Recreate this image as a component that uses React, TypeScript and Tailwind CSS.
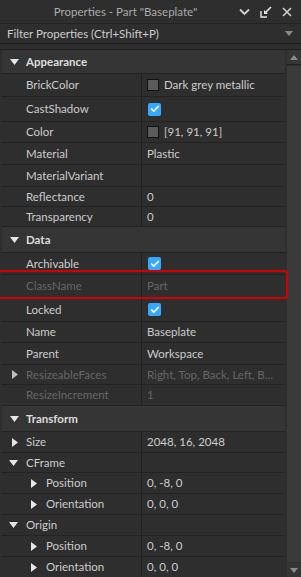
import { Check } from "lucide-react";

type Row = {
  kind: "header" | "prop";
  name: string;
  h: number;
  value?: string;
  check?: boolean;
  swatch?: boolean;
  arrow?: "right" | "down";
  indent?: boolean;
  muted?: boolean;
};

const rows: Row[] = [
  { kind: "header", name: "Appearance", h: 24 },
  { kind: "prop", name: "BrickColor", h: 23, value: "Dark grey metallic", swatch: true },
  { kind: "prop", name: "CastShadow", h: 25, check: true },
  { kind: "prop", name: "Color", h: 21, value: "[91, 91, 91]", swatch: true },
  { kind: "prop", name: "Material", h: 22, value: "Plastic" },
  { kind: "prop", name: "MaterialVariant", h: 22, value: "" },
  { kind: "prop", name: "Reflectance", h: 20, value: "0" },
  { kind: "prop", name: "Transparency", h: 20, value: "0" },
  { kind: "header", name: "Data", h: 26 },
  { kind: "prop", name: "Archivable", h: 22, check: true },
  { kind: "prop", name: "ClassName", h: 23, value: "Part", muted: true },
  { kind: "prop", name: "Locked", h: 24, check: true },
  { kind: "prop", name: "Name", h: 21, value: "Baseplate" },
  { kind: "prop", name: "Parent", h: 22, value: "Workspace" },
  { kind: "prop", name: "ResizeableFaces", h: 20, value: "Right, Top, Back, Left, B...", muted: true, arrow: "right" },
  { kind: "prop", name: "ResizeIncrement", h: 21, value: "1", muted: true },
  { kind: "header", name: "Transform", h: 26 },
  { kind: "prop", name: "Size", h: 21, value: "2048, 16, 2048", arrow: "right" },
  { kind: "prop", name: "CFrame", h: 20, value: "", arrow: "down" },
  { kind: "prop", name: "Position", h: 21, value: "0, -8, 0", arrow: "right", indent: true },
  { kind: "prop", name: "Orientation", h: 21, value: "0, 0, 0", arrow: "right", indent: true },
  { kind: "prop", name: "Origin", h: 21, value: "", arrow: "down" },
  { kind: "prop", name: "Position", h: 21, value: "0, -8, 0", arrow: "right", indent: true },
  { kind: "prop", name: "Orientation", h: 21, value: "0, 0, 0", arrow: "right", indent: true },
];

function Arrow({ dir, muted }: { dir: "right" | "down"; muted?: boolean }) {
  const color = muted ? "#bdbdbd" : "#e6e6e6";
  return dir === "down" ? (
    <svg width="9" height="6" viewBox="0 0 9 6">
      <path d="M0 0 H9 L4.5 6 Z" fill={color} />
    </svg>
  ) : (
    <svg width="6" height="9" viewBox="0 0 6 9">
      <path d="M0 0 V9 L6 4.5 Z" fill={color} />
    </svg>
  );
}

function CheckBox() {
  return (
    <div className="ml-[1px] w-[13px] h-[13px] rounded-[2px] bg-[#35a8ff] flex items-center justify-center">
      <Check className="w-[10px] h-[10px] text-white" strokeWidth={4} />
    </div>
  );
}

export default function App() {
  return (
    <div
      className="relative w-[301px] h-[577px] overflow-hidden bg-[#2e2e2e] flex flex-col text-[11.5px]"
      style={{ fontFamily: "Lato, 'Open Sans', sans-serif" }}
    >
      <div className="h-[24px] shrink-0 flex items-center border-b border-[#222] bg-[#2e2e2e]">
        <div className="flex-1 text-center text-[#aaaaaa] text-[11.5px] pl-[12px]">Properties - Part "Baseplate"</div>
        <div className="flex items-center gap-[10px] pr-[9px]">
          <svg width="11" height="8" viewBox="0 0 11 8">
            <path d="M1 1.5 L5.5 6 L10 1.5" stroke="#d0d0d0" strokeWidth="1.8" fill="none" />
          </svg>
          <svg width="12" height="12" viewBox="0 0 12 12">
            <path d="M1 5 V11 H7" stroke="#e6e6e6" strokeWidth="1.4" fill="none" />
            <path d="M11 1 L5.5 6.5" stroke="#e6e6e6" strokeWidth="1.6" />
            <path d="M4 4 V8 H8 Z" fill="#e6e6e6" />
          </svg>
          <svg width="10" height="10" viewBox="0 0 10 10">
            <path d="M1 1 L9 9 M9 1 L1 9" stroke="#d0d0d0" strokeWidth="1.6" />
          </svg>
        </div>
      </div>

      <div className="h-[20px] shrink-0 flex items-center justify-between px-[7px] bg-[#2e2e2e] border-b border-[#1c1c1c]">
        <span className="text-[#cccccc]">Filter Properties (Ctrl+Shift+P)</span>
        <svg width="8" height="5" viewBox="0 0 8 5" className="mr-[1px]">
          <path d="M0 0 H8 L4 5 Z" fill="#8a8a8a" />
        </svg>
      </div>

      <div className="h-[5px] shrink-0" />

      <div className="flex flex-1 min-h-0">
        <div className="w-[286px] pl-[2px] border-t border-[#1f1f1f]">
          {rows.map((r, i) =>
            r.kind === "header" ? (
              <div
                key={i}
                className="flex items-center bg-[#353535] border-b border-[#222] w-[283px]"
                style={{ height: r.h }}
              >
                <div className="w-[24px] flex justify-center pl-[1px]">
                  <Arrow dir="down" />
                </div>
                <span className="font-bold text-[#dddddd]">{r.name}</span>
              </div>
            ) : (
              <div key={i} className="flex border-b border-[#222] w-[283px]" style={{ height: r.h }}>
                <div className="w-[140px] shrink-0 flex items-center border-r border-[#222]">
                  <div className={`${r.indent ? "w-[44px]" : "w-[24px]"} flex justify-end`}>
                    {r.arrow && (
                      <div className={`${r.indent ? "pr-[9px]" : "pr-[8px]"} flex items-center`}>
                        <Arrow dir={r.arrow} muted={r.muted} />
                      </div>
                    )}
                  </div>
                  <span className={r.muted ? "text-[#666666]" : "text-[#cccccc]"}>{r.name}</span>
                </div>
                <div className="flex-1 flex items-center pl-[5px] overflow-hidden whitespace-nowrap">
                  {r.check && <CheckBox />}
                  {r.swatch && (
                    <div className="w-[12px] h-[12px] bg-[#5b5b5b] border border-[#111] mr-[5px]" />
                  )}
                  {r.value !== undefined && (
                    <span className={r.muted ? "text-[#666666]" : "text-[#cccccc]"}>{r.value}</span>
                  )}
                </div>
              </div>
            )
          )}
        </div>

        <div className="flex-1 flex flex-col bg-[#2e2e2e] pl-[1px] border-t border-[#1f1f1f]">
          <div className="h-[15px] bg-[#353535] flex items-center justify-center border-b border-[#222]">
            <svg width="8" height="5" viewBox="0 0 8 5">
              <path d="M0 5 H8 L4 0 Z" fill="#8a8a8a" />
            </svg>
          </div>
          <div className="flex-1 bg-[#3a3a3a] my-[1px]" />
          <div className="h-[14px] bg-[#353535] flex items-center justify-center">
            <svg width="8" height="5" viewBox="0 0 8 5">
              <path d="M0 0 H8 L4 5 Z" fill="#8a8a8a" />
            </svg>
          </div>
        </div>
      </div>

      <div className="absolute left-[-4px] top-[270px] w-[292px] h-[29px] border-2 border-[#d40000] rounded-[4px] pointer-events-none" />
    </div>
  );
}
